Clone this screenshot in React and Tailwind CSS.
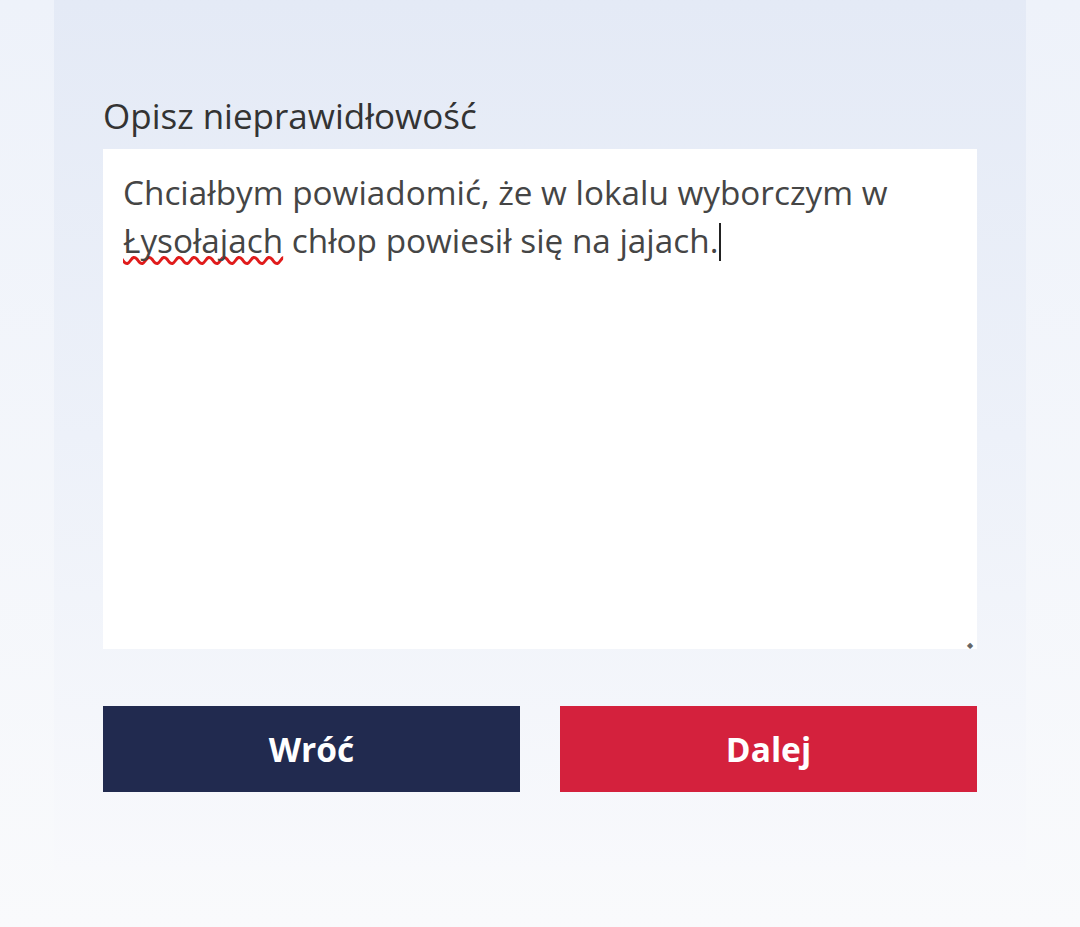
export default function App() {
  return (
    <div
      className="min-h-[927px] w-full bg-gradient-to-b from-[#eef2fa] to-[#f9fafc]"
      style={{ fontFamily: '"Open Sans", "Noto Sans", sans-serif' }}
    >
      <div className="mx-[54px] min-h-[870px] bg-gradient-to-b from-[#e4eaf6] via-[#edf1f9] to-[#f8f9fc] px-[49px] pt-[92px]">
        <label className="block text-[35px] leading-[48px] text-[#333333]">
          Opisz nieprawidłowość
        </label>
        <div className="relative mt-[9px] h-[500px] w-full bg-white px-5 pt-5 text-[33.3px] leading-[46px] text-[#454545]">
          <p>
            Chciałbym powiadomić, że w lokalu wyborczym w{" "}
            <span className="underline decoration-wavy decoration-[#e01b1b] decoration-[2.5px] underline-offset-[3px] [text-decoration-skip-ink:none]">
              Łysołajach
            </span>{" "}
            chłop powiesił się na jajach.
            <span className="ml-[1px] inline-block h-[38px] w-[2px] translate-y-[8px] bg-[#222]" />
          </p>
          <span className="absolute bottom-0 right-[4px] text-[8px] leading-none text-[#666]">◆</span>
        </div>
        <div className="mt-[57px] grid grid-cols-2 gap-10">
          <button className="h-[86px] bg-[#212a4f] text-[33.5px] font-bold text-white">
            Wróć
          </button>
          <button className="h-[86px] bg-[#d4213d] text-[33.5px] font-bold text-white">
            Dalej
          </button>
        </div>
      </div>
    </div>
  );
}
